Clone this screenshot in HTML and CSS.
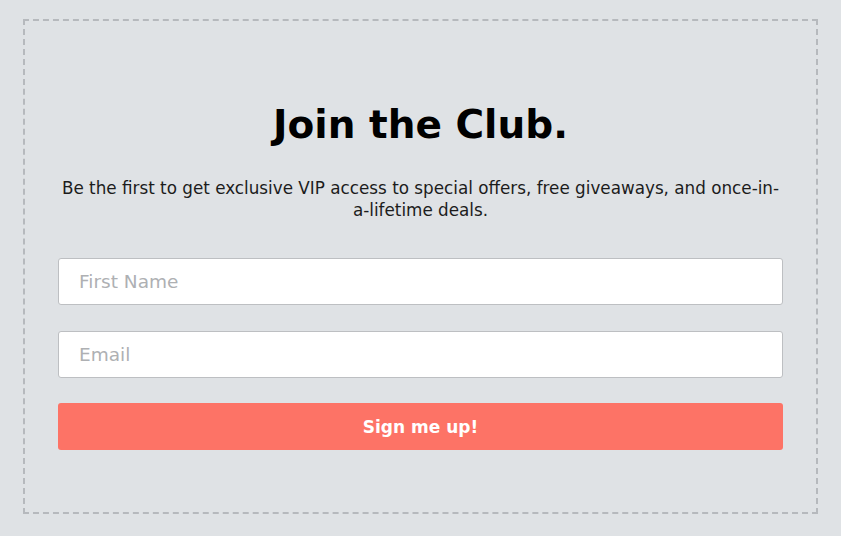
FILE: index.html
```html
<!DOCTYPE html>
<html lang="en">
<head>
    <meta charset="UTF-8">
    <title>Join the Club</title>
    <link rel="stylesheet" href="styles.css">
</head>
<body>

    <div class="club">
        <h1 class="title">Join the Club.</h1>
        <p class="lead">Be the first to get exclusive VIP access to special offers, free giveaways, and once-in-a-lifetime deals.</p>

        <form class="signup">
            <input type="text" class="field" placeholder="First Name">
            <input type="text" class="field" placeholder="Email">
            <button type="button" class="btn">Sign me up!</button>
        </form>
    </div>

</body>
</html>
```
FILE: styles.css
```css
body {
    margin: 0;
    background-color: #dfe2e5;
    font-family: "DejaVu Sans", sans-serif;
    color: #111;
}

.club {
    margin: 19px 23px 0 23px;
    height: 495px;
    box-sizing: border-box;
    border: 2px dashed #b6b9bd;
    padding: 0 33px;
    text-align: center;
}

.title {
    margin: 78px 0 0 0;
    font-size: 39px;
    line-height: 52px;
    font-weight: bold;
    color: #000;
}

.lead {
    margin: 26px 0 0 0;
    font-size: 16.8px;
    line-height: 22px;
    color: #1c1c1c;
}

.signup {
    margin-top: 37px;
    display: flex;
    flex-direction: column;
    gap: 25.5px;
}

.field {
    height: 47px;
    box-sizing: border-box;
    border: 1px solid #bdbfc2;
    border-radius: 3px;
    background: #fff;
    padding: 0 20px;
    font-family: "DejaVu Sans", sans-serif;
    font-size: 18.5px;
    color: #333;
}

.field::placeholder {
    color: #aeb0b3;
}

.btn {
    height: 47px;
    border: none;
    border-radius: 3px;
    background-color: #fd7366;
    color: #fff;
    font-family: "DejaVu Sans", sans-serif;
    font-size: 17px;
    font-weight: bold;
    cursor: pointer;
}
```
